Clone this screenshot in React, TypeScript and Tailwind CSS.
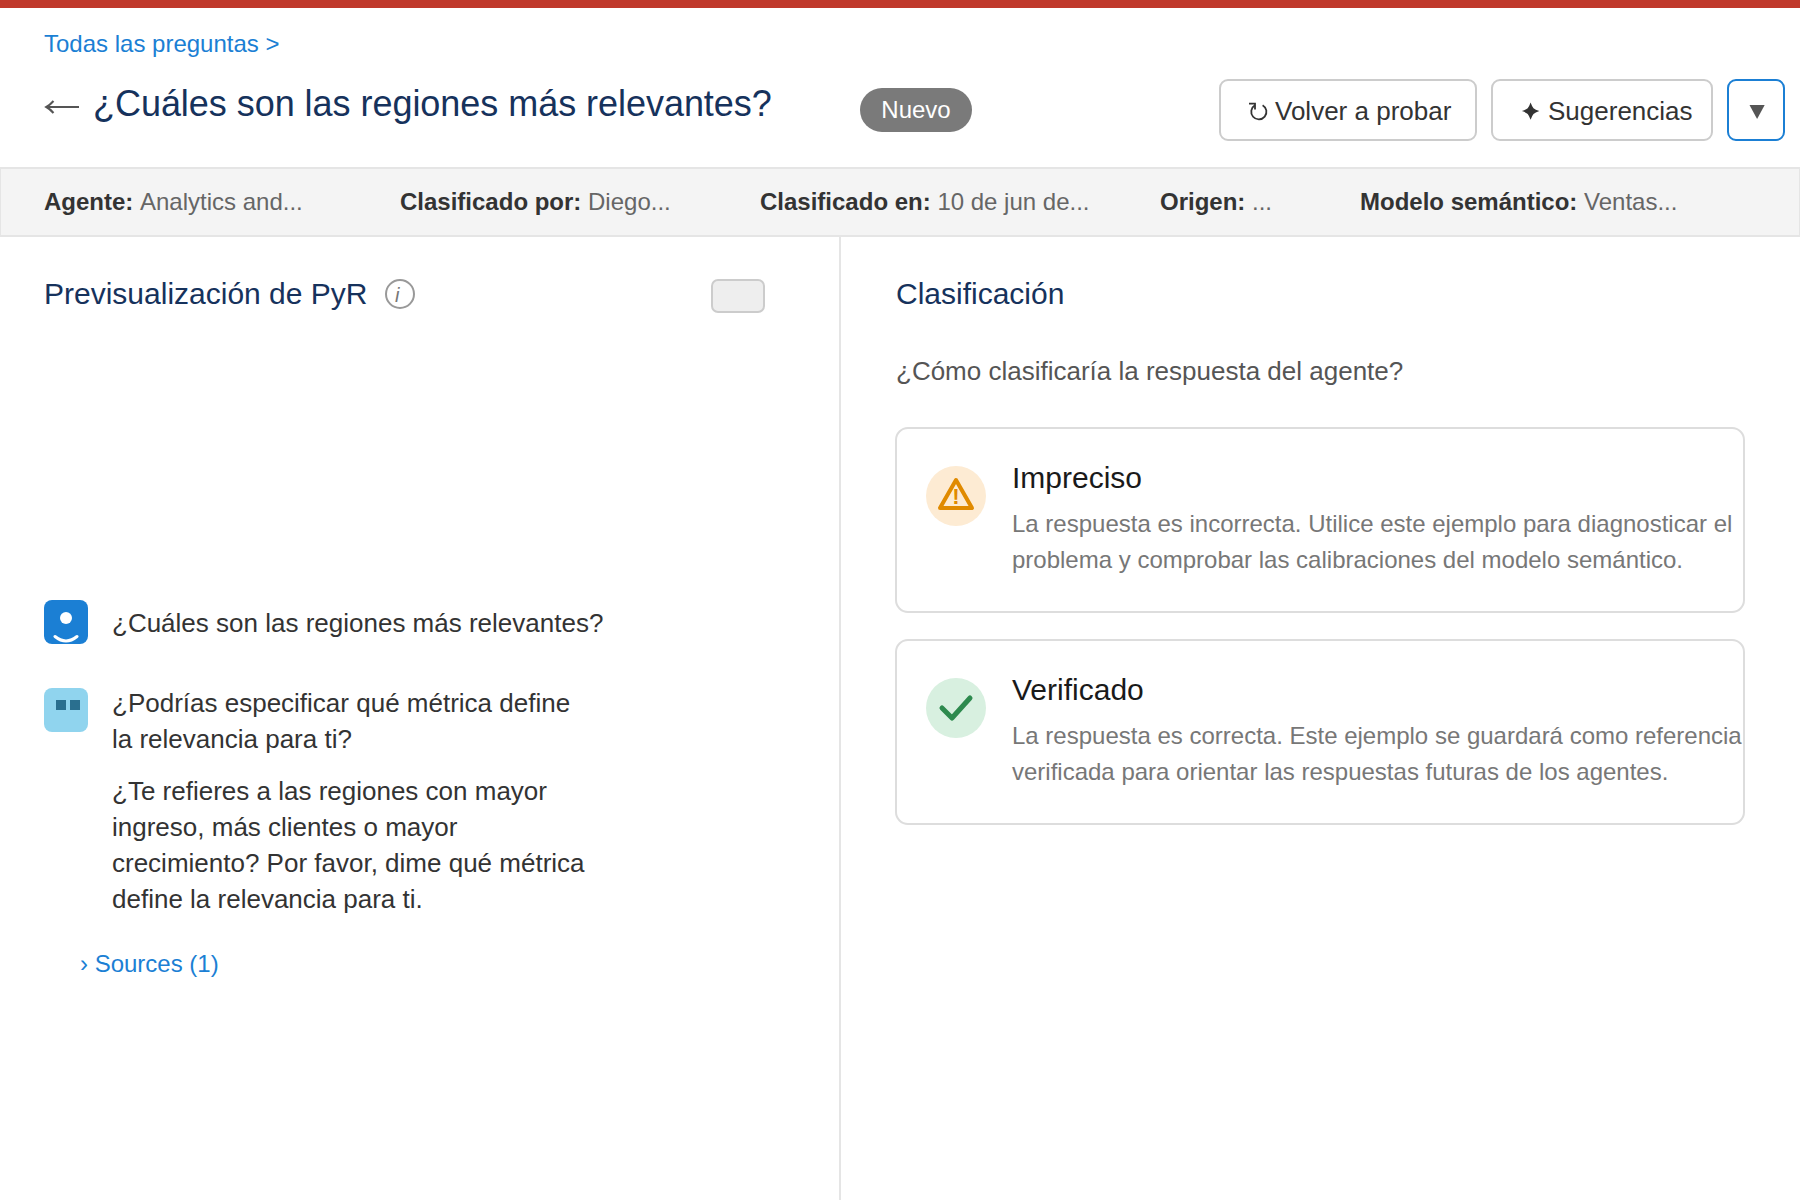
import React from 'react';

interface MetaItem {
  label: string;
  value: string;
  width: string;
}

const metaItems: MetaItem[] = [
  { label: 'Agente:', value: 'Analytics and...', width: 'w-[356px]' },
  { label: 'Clasificado por:', value: 'Diego...', width: 'w-[360px]' },
  { label: 'Clasificado en:', value: '10 de jun de...', width: 'w-[400px]' },
  { label: 'Origen:', value: '...', width: 'w-[200px]' },
  { label: 'Modelo semántico:', value: 'Ventas...', width: 'w-[400px]' }
];

const BackIcon = () => (
  <svg className="mt-[17px] h-4 w-[49px]" viewBox="0 0 49 16" fill="none" stroke="#555" strokeWidth="2">
    <path d="M3 7 H35" />
    <path d="M9.5 1 Q6 5 2.3 7 Q6 9 9.5 13" />
  </svg>
);

const RetryIcon = () => (
  <svg className="mt-1 h-[22px] w-7" viewBox="0 0 28 22" fill="none" stroke="#333" strokeWidth="1.8">
    <path d="M14.6 4.2 A7.6 7.6 0 1 1 6.9 4.3" />
    <path d="M1 2.6 H7 V8.4" />
  </svg>
);

const SparkIcon = () => (
  <svg className="mt-1 h-[22px] w-7" viewBox="0 0 28 22" fill="#333">
    <path d="M10.6 1.4 Q12 5.4 13.5 7.2 Q15.3 8.7 19.3 10.1 Q15.3 11.5 13.5 13 Q12 14.8 10.6 18.8 Q9.2 14.8 7.7 13 Q5.9 11.5 1.9 10.1 Q5.9 8.7 7.7 7.2 Q9.2 5.4 10.6 1.4 Z" />
  </svg>
);

const WarningIcon = () => (
  <svg className="h-[60px] w-[60px] shrink-0" viewBox="0 0 60 60">
    <circle cx="30" cy="30" r="30" fill="#fdebd3" />
    <path d="M30 14 L46 42 L14 42 Z" fill="none" stroke="#e08a00" strokeWidth="4" strokeLinejoin="round" />
    <text x="29.8" y="38" textAnchor="middle" fontSize="22" fontWeight="bold" fill="#e08a00">!</text>
  </svg>
);

const CheckIcon = () => (
  <svg className="h-[60px] w-[60px] shrink-0" viewBox="0 0 60 60">
    <circle cx="30" cy="30" r="30" fill="#d8f0e0" />
    <path d="M16 30 L26 40 L44 20" fill="none" stroke="#2d8a4e" strokeWidth="5" strokeLinecap="round" strokeLinejoin="round" />
  </svg>
);

const UserAvatar = () => (
  <svg className="h-11 w-11 shrink-0" viewBox="0 0 44 44">
    <rect width="44" height="44" rx="8" fill="#1b7fd4" />
    <circle cx="22" cy="18" r="6" fill="#fff" />
    <path d="M11 36.5 Q22 45.5 33 36.5" fill="none" stroke="#fff" strokeWidth="3" strokeLinecap="round" />
  </svg>
);

const AgentAvatar = () => (
  <svg className="h-11 w-11 shrink-0" viewBox="0 0 44 44">
    <rect width="44" height="44" rx="8" fill="#90d4ee" />
    <rect x="12" y="12" width="10" height="10" fill="#2a6f8f" />
    <rect x="26" y="12" width="10" height="10" fill="#2a6f8f" />
  </svg>
);

interface RatingCardProps {
  icon: React.ReactNode;
  title: string;
  lines: string[];
}

const RatingCard: React.FC<RatingCardProps> = ({ icon, title, lines }) => (
  <button className="flex h-[186px] w-[850px] items-start gap-[26px] rounded-[13px] border-2 border-[#ddd] pt-[37px] pl-[29px] text-left">
    {icon}
    <div className="-mt-[5px] whitespace-nowrap">
      <h3 className="text-[30px] leading-[34px] text-[#1a1a1a]">{title}</h3>
      <p className="mt-[11px] text-2xl leading-9 text-[#777]">
        {lines[0]}
        <br />
        {lines[1]}
      </p>
    </div>
  </button>
);

export default function App() {
  return (
    <div className="flex h-[1200px] w-[1800px] flex-col overflow-hidden bg-white font-['Liberation_Sans',Arial,sans-serif]">
      <div className="h-2 shrink-0 bg-[#c0392b]" />

      <header className="h-[159px] shrink-0 pt-[22px] pl-11">
        <a className="block h-7 text-2xl leading-7 text-[#1b7fd4]">Todas las preguntas &gt;</a>
        <div className="mt-[21px] flex">
          <div className="flex w-[816px] whitespace-nowrap pt-1">
            <BackIcon />
            <h1 className="text-4xl leading-[42px] tracking-[-0.04px] text-[#16325c]">
              ¿Cuáles son las regiones más relevantes?
            </h1>
          </div>
          <span className="mt-[9px] h-11 w-28 rounded-full bg-[#7a7a7a] text-center text-2xl leading-[44px] text-white">
            Nuevo
          </span>
          <div className="ml-[247px] flex gap-3.5 whitespace-nowrap text-[26px] leading-[60px] text-[#333]">
            <button className="flex h-[62px] w-[258px] items-center rounded-[9px] border-2 border-[#ccc] pl-[27px]">
              <RetryIcon />
              <span className="-ml-px pt-0.5">Volver a probar</span>
            </button>
            <button className="flex h-[62px] w-[222px] items-center rounded-[9px] border-2 border-[#ccc] pl-[27px]">
              <SparkIcon />
              <span className="pt-0.5">Sugerencias</span>
            </button>
            <button className="flex h-[62px] w-[58px] items-center rounded-[9px] border-2 border-[#1b7fd4] pl-5">
              <svg className="h-[18px] w-4" viewBox="0 0 16 18" fill="#555">
                <path d="M0.5 4 H15.7 L8.1 18 Z" />
              </svg>
            </button>
          </div>
        </div>
      </header>

      <section className="flex h-[70px] shrink-0 overflow-hidden whitespace-nowrap border-x border-y-2 border-[#e5e5e5] bg-[#f4f4f4] pl-[43px] text-2xl leading-[66px]">
        {metaItems.map((item) => (
          <div key={item.label} className={`shrink-0 text-[#666] ${item.width}`}>
            <b className="text-[#333]">{item.label} </b>
            {item.value}
          </div>
        ))}
      </section>

      <main className="flex flex-1">
        <section className="w-[841px] border-r-2 border-[#e5e5e5] pt-10 pl-11">
          <div className="flex h-[36px]">
            <h2 className="w-[341px] text-[30px] leading-[34px] text-[#16325c]">Previsualización de PyR</h2>
            <svg className="mt-[2px] h-[30px] w-[30px]" viewBox="0 0 30 30">
              <circle cx="15" cy="15" r="14" fill="none" stroke="#999" strokeWidth="2" />
              <text x="10" y="23" fontSize="20" fontStyle="italic" fill="#777">i</text>
            </svg>
            <div className="mt-[2px] ml-[296px] h-[34px] w-[54px] rounded-[7px] border-2 border-[#ccc] bg-[#eee]" />
          </div>

          <div className="mt-[287px] flex gap-6 text-[26px] leading-9 text-[#333]">
            <UserAvatar />
            <p className="pt-[5px]">¿Cuáles son las regiones más relevantes?</p>
          </div>

          <div className="mt-11 flex gap-6 text-[26px] leading-9 text-[#333]">
            <AgentAvatar />
            <div className="-mt-[3px] whitespace-nowrap">
              <p>
                ¿Podrías especificar qué métrica define
                <br />
                la relevancia para ti?
              </p>
              <p className="mt-4">
                ¿Te refieres a las regiones con mayor
                <br />
                ingreso, más clientes o mayor
                <br />
                crecimiento? Por favor, dime qué métrica
                <br />
                define la relevancia para ti.
              </p>
            </div>
          </div>

          <a className="mt-[33px] ml-9 block text-2xl leading-7 text-[#1b7fd4]">› Sources (1)</a>
        </section>

        <section className="pt-10 pl-[54px]">
          <h2 className="ml-px text-[30px] leading-[34px] text-[#16325c]">Clasificación</h2>
          <p className="mt-[42px] ml-px text-[26px] leading-[36px] text-[#555]">
            ¿Cómo clasificaría la respuesta del agente?
          </p>
          <div className="mt-[38px] flex flex-col gap-[26px]">
            <RatingCard
              icon={<WarningIcon />}
              title="Impreciso"
              lines={[
                'La respuesta es incorrecta. Utilice este ejemplo para diagnosticar el',
                'problema y comprobar las calibraciones del modelo semántico.'
              ]}
            />
            <RatingCard
              icon={<CheckIcon />}
              title="Verificado"
              lines={[
                'La respuesta es correcta. Este ejemplo se guardará como referencia',
                'verificada para orientar las respuestas futuras de los agentes.'
              ]}
            />
          </div>
        </section>
      </main>
    </div>
  );
}
